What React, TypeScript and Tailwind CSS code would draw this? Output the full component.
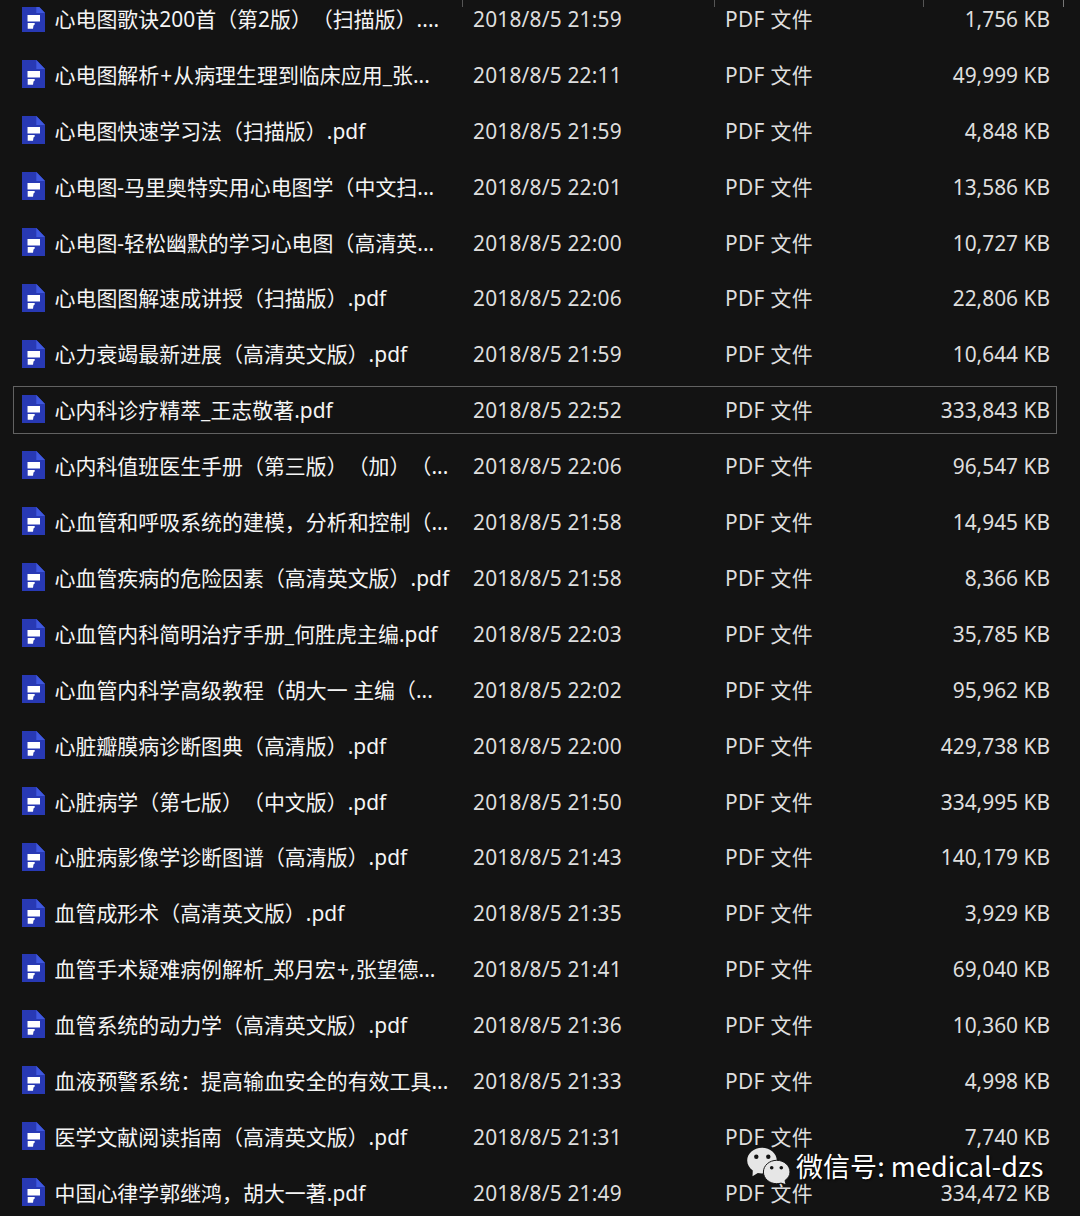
import { Fragment } from 'react';

type FileRow = { name: string; date: string; size: string; focused?: boolean };

const files: FileRow[] = [
  { name: '心电图歌诀200首（第2版）（扫描版）....', date: '2018/8/5 21:59', size: '1,756 KB' },
  { name: '心电图解析+从病理生理到临床应用_张...', date: '2018/8/5 22:11', size: '49,999 KB' },
  { name: '心电图快速学习法（扫描版）.pdf', date: '2018/8/5 21:59', size: '4,848 KB' },
  { name: '心电图-马里奥特实用心电图学（中文扫...', date: '2018/8/5 22:01', size: '13,586 KB' },
  { name: '心电图-轻松幽默的学习心电图（高清英...', date: '2018/8/5 22:00', size: '10,727 KB' },
  { name: '心电图图解速成讲授（扫描版）.pdf', date: '2018/8/5 22:06', size: '22,806 KB' },
  { name: '心力衰竭最新进展（高清英文版）.pdf', date: '2018/8/5 21:59', size: '10,644 KB' },
  { name: '心内科诊疗精萃_王志敬著.pdf', date: '2018/8/5 22:52', size: '333,843 KB', focused: true },
  { name: '心内科值班医生手册（第三版）（加）（...', date: '2018/8/5 22:06', size: '96,547 KB' },
  { name: '心血管和呼吸系统的建模，分析和控制（...', date: '2018/8/5 21:58', size: '14,945 KB' },
  { name: '心血管疾病的危险因素（高清英文版）.pdf', date: '2018/8/5 21:58', size: '8,366 KB' },
  { name: '心血管内科简明治疗手册_何胜虎主编.pdf', date: '2018/8/5 22:03', size: '35,785 KB' },
  { name: '心血管内科学高级教程（胡大一 主编（...', date: '2018/8/5 22:02', size: '95,962 KB' },
  { name: '心脏瓣膜病诊断图典（高清版）.pdf', date: '2018/8/5 22:00', size: '429,738 KB' },
  { name: '心脏病学（第七版）（中文版）.pdf', date: '2018/8/5 21:50', size: '334,995 KB' },
  { name: '心脏病影像学诊断图谱（高清版）.pdf', date: '2018/8/5 21:43', size: '140,179 KB' },
  { name: '血管成形术（高清英文版）.pdf', date: '2018/8/5 21:35', size: '3,929 KB' },
  { name: '血管手术疑难病例解析_郑月宏+,张望德...', date: '2018/8/5 21:41', size: '69,040 KB' },
  { name: '血管系统的动力学（高清英文版）.pdf', date: '2018/8/5 21:36', size: '10,360 KB' },
  { name: '血液预警系统：提高输血安全的有效工具...', date: '2018/8/5 21:33', size: '4,998 KB' },
  { name: '医学文献阅读指南（高清英文版）.pdf', date: '2018/8/5 21:31', size: '7,740 KB' },
  { name: '中国心律学郭继鸿，胡大一著.pdf', date: '2018/8/5 21:49', size: '334,472 KB' },
];

function PdfIcon() {
  return (
    <svg className="mb-[2px] h-7 w-[23px] shrink-0" viewBox="0 0 23 28">
      <path d="M0 0H14.500L23 9V28H0Z" fill="#2839b4" />
      <path d="M14.300 0L23 9H14.300Z" fill="#4059df" />
      <path d="M5.500 11H18V17.500H5.500Z" fill="#fff" />
      <path d="M5.700 19H12.700V20.500L11.500 21.500L11 24.700H5.700Z" fill="#fff" />
    </svg>
  );
}

function WeChatIcon() {
  return (
    <svg className="h-[38px] w-[44px] shrink-0" viewBox="0 0 44 38">
      <path d="M16 .8C7.800.8 1.200 6.500 1.200 13.600c0 4 2.200 7.600 5.600 9.900L6.500 29.300l5.300-3.300c1.300.3 2.700.4 4.200.4 8.200 0 14.800-5.700 14.800-12.800S24.200.8 16 .8Z" fill="#e6e6e6" />
      <path d="M30.700 13.300c-7.300 0-13.300 5.200-13.300 11.700s6 11.700 13.300 11.700c1.500 0 3-.2 4.300-.6l5.200 1.700-1.200-4.300c3-2.100 5-5.200 5-8.500 0-6.500-6-11.700-13.300-11.700Z" fill="#e6e6e6" stroke="#131313" strokeWidth="1" />
      <circle cx="10.300" cy="9.700" r="2.200" fill="#131313" />
      <circle cx="22.300" cy="9.700" r="2.200" fill="#131313" />
      <circle cx="25.700" cy="20.700" r="1.800" fill="#131313" />
      <circle cx="35.300" cy="20.700" r="1.800" fill="#131313" />
    </svg>
  );
}

function FileName({ name }: { name: string }) {
  return (
    <div className="ml-[9.500px] w-[418.500px] pt-px tracking-[0.05px] text-[#f5f5f5]">
      {name.split('+').map((part, i) => (
        <Fragment key={i}>
          {i > 0 && <span className="px-px">+</span>}
          {part}
        </Fragment>
      ))}
    </div>
  );
}

export default function App() {
  return (
    <div
      lang="zh-CN"
      className="relative h-[1216px] w-[1080px] overflow-hidden bg-[#131313] font-['Noto_Sans','Noto_Sans_CJK_SC',sans-serif] text-[20.9px] text-[#dedede] [text-spacing-trim:space-all]"
    >
      <div className="absolute inset-x-0 top-0 flex h-[7px] bg-[#131313]">
        <div className="w-[463px] border-r border-[#555]" />
        <div className="w-[252px] border-r border-[#555]" />
        <div className="w-[209px] border-r border-[#555]" />
        <div className="w-[140px] border-r border-[#777]" />
      </div>
      <div className="-mt-[8.900px] flex flex-col pr-[23px] pl-[13px]">
        {files.map((f) => (
          <div key={f.name} className="flex h-[55.92px] items-center">
            <div
              className={`flex h-12 w-full items-center whitespace-pre border pr-[6px] pl-2 ${
                f.focused ? 'border-[#626262]' : 'border-transparent'
              }`}
            >
              <PdfIcon />
              <FileName name={f.name} />
              <div className="w-[252px] pt-px tracking-[0.2px]">{f.date}</div>
              <div className="w-[110px] pt-px tracking-[0.35px]">PDF 文件</div>
              <div className="flex-1 pt-px text-right">{f.size}</div>
            </div>
          </div>
        ))}
      </div>
      <div className="absolute top-[1146px] left-[746px] flex items-center text-white">
        <WeChatIcon />
        <span className="ml-[6px] whitespace-pre font-['Noto_Sans_CJK_SC',sans-serif] text-[27px] leading-[40px] tracking-[0.06px] [text-shadow:1px_1px_2px_#000]">微信号: medical-dzs</span>
      </div>
    </div>
  );
}
